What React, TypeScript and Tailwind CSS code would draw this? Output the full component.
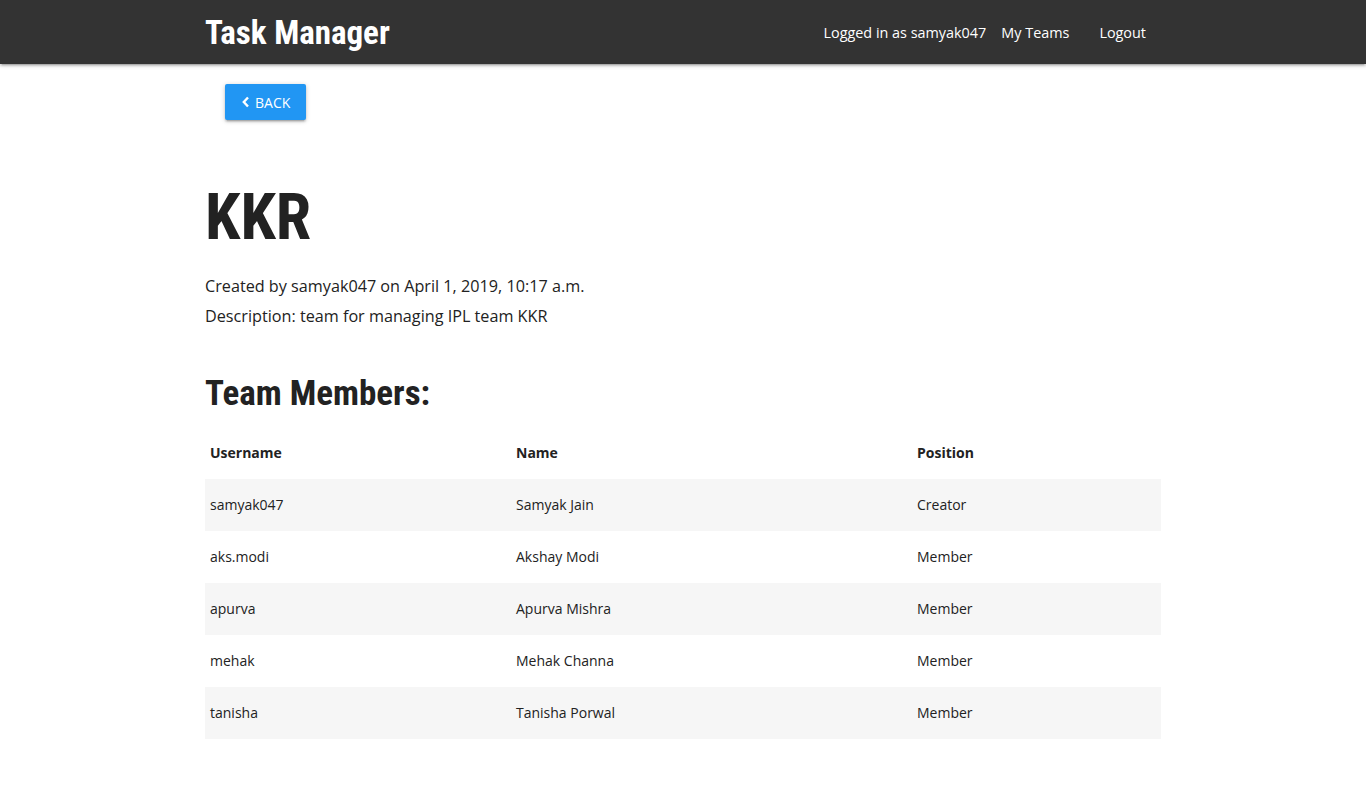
import React from 'react';

const members = [
  { username: 'samyak047', name: 'Samyak Jain', position: 'Creator' },
  { username: 'aks.modi', name: 'Akshay Modi', position: 'Member' },
  { username: 'apurva', name: 'Apurva Mishra', position: 'Member' },
  { username: 'mehak', name: 'Mehak Channa', position: 'Member' },
  { username: 'tanisha', name: 'Tanisha Porwal', position: 'Member' },
];

const heading = "font-['Roboto_Condensed','Roboto',sans-serif] [font-stretch:condensed] font-bold";

const App = () => {
  return (
    <div className="min-h-screen bg-white font-['Open_Sans','Noto_Sans',sans-serif] text-[#222]">
      <nav className="h-16 bg-[#333333] shadow-[0_2px_2px_0_rgba(0,0,0,0.14),0_3px_1px_-2px_rgba(0,0,0,0.12),0_1px_5px_0_rgba(0,0,0,0.2)]">
        <div className="mx-auto flex h-full w-[956px] items-center justify-between">
          <a href="#" className={`${heading} text-[33px] leading-none text-white`}>Task Manager</a>
          <div className="flex items-center pt-[1px] text-[14.4px] text-white">
            <span>Logged in as samyak047</span>
            <a href="#" className="px-[15px]">My Teams</a>
            <a href="#" className="px-[15px]">Logout</a>
          </div>
        </div>
      </nav>

      <main className="mx-auto w-[956px]">
        <div className="pt-5 pl-5">
          <button className="flex h-9 items-center gap-1 rounded-[2px] bg-[#2196f3] px-4 text-[14px] text-white shadow-[0_2px_2px_0_rgba(0,0,0,0.14),0_3px_1px_-2px_rgba(0,0,0,0.12),0_1px_5px_0_rgba(0,0,0,0.2)]">
            <svg width="10" height="12" viewBox="0 0 10 12" fill="none" stroke="white" strokeWidth="2.4">
              <path d="M7 1.5 L2.8 6 L7 10.5" />
            </svg>
            BACK
          </button>
        </div>

        <h1 className={`${heading} mt-[59px] text-[64px] leading-[77px] text-[#222]`}>KKR</h1>
        <div className="mt-[15px] text-[16.2px] leading-[30px]">
          <p>Created by samyak047 on April 1, 2019, 10:17 a.m.</p>
          <p>Description: team for managing IPL team KKR</p>
        </div>

        <h2 className={`${heading} mt-[40px] text-[35px] leading-[45.6px] text-[#222]`}>Team Members:</h2>

        <table className="mt-[10px] w-full border-collapse text-[14px]">
          <thead>
            <tr className="h-[52px] text-left">
              <th className="w-[306px] px-[5px] font-bold">Username</th>
              <th className="w-[401px] px-[5px] font-bold">Name</th>
              <th className="px-[5px] font-bold">Position</th>
            </tr>
          </thead>
          <tbody>
            {members.map((m, i) => (
              <tr key={m.username} className={`h-[52px] ${i % 2 === 0 ? 'bg-[#f6f6f6]' : 'bg-white'}`}>
                <td className="px-[5px]">{m.username}</td>
                <td className="px-[5px]">{m.name}</td>
                <td className="px-[5px]">{m.position}</td>
              </tr>
            ))}
          </tbody>
        </table>
      </main>
    </div>
  );
};

export default App;
